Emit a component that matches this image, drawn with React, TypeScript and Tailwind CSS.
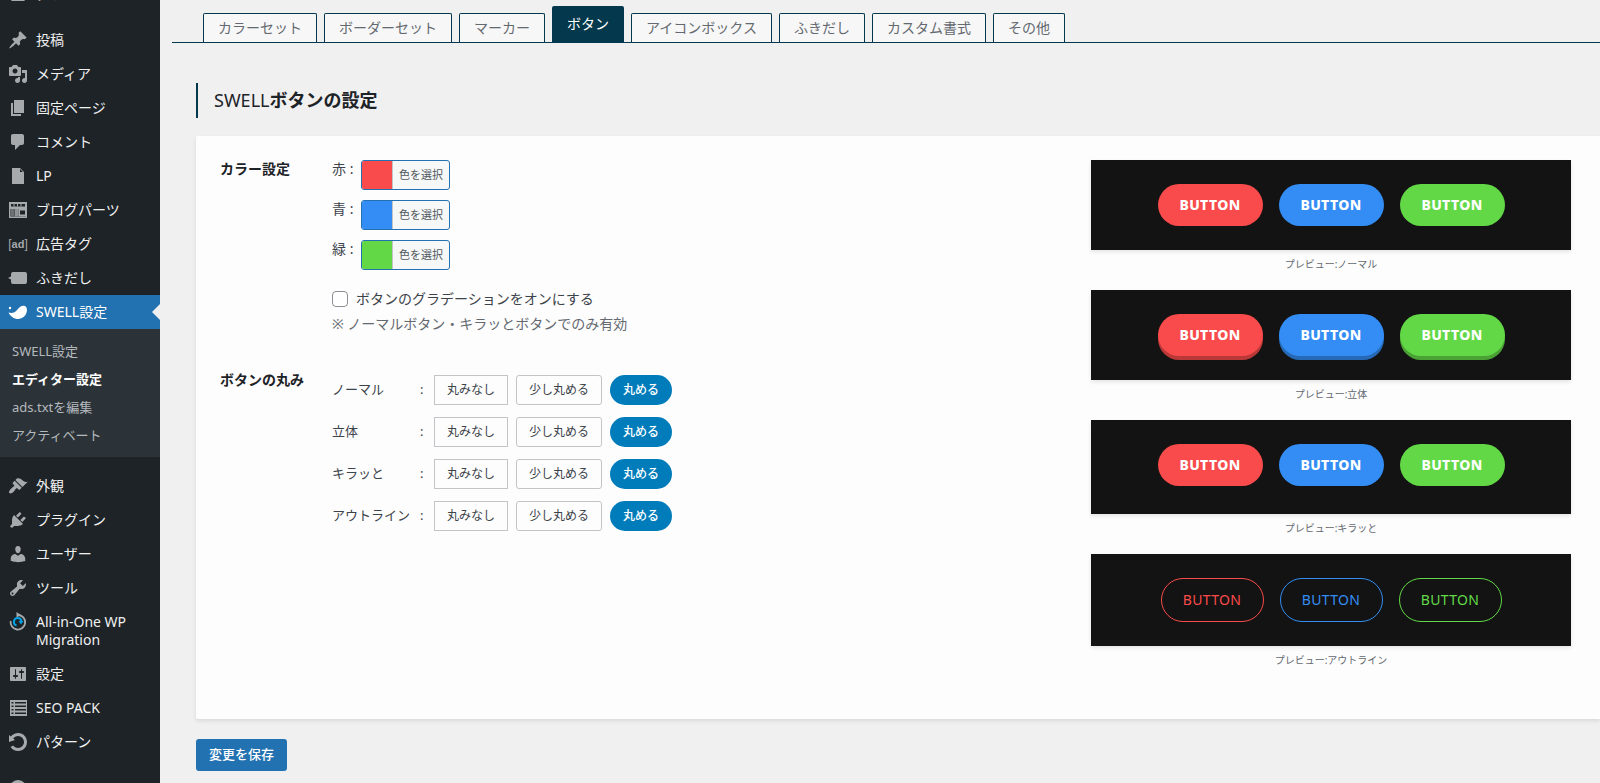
import { ReactNode } from 'react';

const ICONS = {
  dashboard: 'M3.760 17h12.480A8 8 0 0 0 18 12a8 8 0 1 0-16 0c0 1.890.66 3.630 1.760 5zM10 5l1 1-1 1-1-1zm-3.500 2l1 1-1 1-1-1zm9 1l-4 5.500a1.700 1.700 0 1 1-2-1.500z',
  page: 'M6 15V2h10v13H6zm-1 1h8v2H3V5h2v11z',
  post: 'M10.44 3.02l1.82-1.82 6.36 6.35-1.83 1.82c-1.05-.68-2.48-.57-3.41.36l-.75.75c-.92.93-1.04 2.35-.35 3.41l-1.83 1.82-2.41-2.41-2.8 2.79c-.42.42-3.38 2.71-3.8 2.29s1.86-3.39 2.28-3.81l2.79-2.79L4.1 9.36l1.83-1.82c1.05.69 2.48.57 3.4-.36l.75-.75c.93-.92 1.05-2.35.36-3.41z',
  media: 'M13 11V4c0-.55-.45-1-1-1h-1.67L9 1H5L3.67 3H2c-.55 0-1 .45-1 1v7c0 .55.45 1 1 1h10c.55 0 1-.45 1-1zM7 4.5c1.38 0 2.5 1.12 2.5 2.5S8.38 9.5 7 9.5 4.5 8.38 4.5 7 5.62 4.5 7 4.5zM14 6h5v10.5c0 1.38-1.12 2.5-2.5 2.5S14 17.88 14 16.5s1.12-2.5 2.5-2.5c.17 0 .34.02.5.05V9h-3V6zm-4 8.05V13h2v3.5c0 1.38-1.12 2.5-2.5 2.5S7 17.88 7 16.5 8.12 14 9.5 14c.17 0 .34.02.5.05z',
  comment: 'M5 2h9c1.1 0 2 .9 2 2v7c0 1.1-.9 2-2 2h-2l-5 5v-5H5c-1.1 0-2-.9-2-2V4c0-1.1.9-2 2-2z',
  file: 'M12 2l4 4v12H4V2h8zm0 4h3l-3-3v3z',
  brush: 'M14.48 11.06L7.41 3.99l1.5-1.5c.5-.56 2.3-.47 3.51.32 1.21.8 1.43 1.28 2.91 2.1 1.18.64 2.45 1.26 4.45.85zm-.71.71L6.7 4.7 4.93 6.47c-.39.39-.39 1.02 0 1.41l1.06 1.06c.39.39.39 1.03 0 1.42-.6.6-1.43 1.11-2.21 1.69-.35.26-.7.53-1.01.84C1.43 14.23.4 16.08 1.4 17.07c.99 1 2.84-.03 4.18-1.36.31-.31.58-.66.85-1.02.57-.78 1.08-1.61 1.69-2.21.39-.39 1.02-.39 1.41 0l1.06 1.06c.39.39 1.02.39 1.41 0z',
  plugin: 'M13.11 4.36L9.87 7.6 8 5.73l3.24-3.24c.35-.34 1.05-.2 1.56.32.52.51.66 1.21.31 1.55zm-8 1.77l.91-1.12 9.01 9.01-1.19.84c-.71.71-2.63 1.16-3.82 1.16H6.14L4.9 17.26c-.59.59-1.54.59-2.12 0-.59-.58-.59-1.53 0-2.12l1.24-1.24v-3.88c0-1.13.4-3.19 1.09-3.89zm7.26 3.97l3.24-3.24c.34-.35 1.04-.21 1.55.31.52.51.66 1.21.31 1.55l-3.24 3.25z',
  user: 'M10 9.25c-2.27 0-2.73-3.44-2.73-3.44C7 4.02 7.82 2 9.97 2c2.16 0 2.98 2.02 2.71 3.81 0 0-.41 3.44-2.68 3.44zm0 2.57L12.72 10c2.39 0 4.52 2.33 4.52 4.53v2.49s-3.65 1.13-7.24 1.13c-3.65 0-7.24-1.13-7.24-1.13v-2.49c0-2.25 1.94-4.48 4.47-4.48z',
  tool: 'M16.68 9.77c-1.34 1.34-3.3 1.67-4.95.99l-5.41 6.52c-.99.99-2.59.99-3.58 0s-.99-2.59 0-3.57l6.52-5.42c-.68-1.65-.35-3.61.99-4.95 1.28-1.28 3.12-1.62 4.72-1.06l-2.89 2.89 2.82 2.82 2.86-2.87c.53 1.58.18 3.39-1.08 4.65zM3.81 16.21c.4.39 1.04.39 1.43 0 .4-.4.4-1.04 0-1.43-.39-.4-1.03-.4-1.43 0-.39.39-.39 1.03 0 1.43z',
  settings: 'M18 16V4c0-.55-.45-1-1-1H3c-.55 0-1 .45-1 1v12c0 .55.45 1 1 1h14c.55 0 1-.45 1-1zM8 11h1c.55 0 1 .45 1 1s-.45 1-1 1H8v1.5c0 .28-.22.5-.5.5s-.5-.22-.5-.5V13H6c-.55 0-1-.45-1-1s.45-1 1-1h1V5.5c0-.28.22-.5.5-.5s.5.22.5.5V11zm5-2h-1c-.55 0-1-.45-1-1s.45-1 1-1h1V5.5c0-.28.22-.5.5-.5s.5.22.5.5V7h1c.55 0 1 .45 1 1s-.45 1-1 1h-1v5.5c0 .28-.22.5-.5.5s-.5-.22-.5-.5V9z',
  rotate: 'M10.25 1.02c5.1 0 8.75 4.04 8.75 9s-3.65 9-8.75 9c-3.2 0-6.02-1.59-7.68-3.99l2.59-1.52c1.1 1.5 2.86 2.51 4.84 2.51 3.3 0 6-2.79 6-6s-2.7-6-6-6c-1.97 0-3.72 1-4.82 2.49L7 8.02l-6 2v-7L2.89 4.6c1.69-2.17 4.36-3.58 7.36-3.58z',
  list: 'M2 2h17v16H2zM3.500 4v1.500h2V4zm3.500 0v1.500h11V4zM3.500 7.500V9h2V7.500zm3.500 0V9h11V7.500zM3.500 11v1.500h2V11zm3.500 0v1.500h11V11zm-3.500 3.500V16h2v-1.500zm3.500 0V16h11v-1.500z',
  balloon: 'M5 4h12a2 2 0 0 1 2 2v8a2 2 0 0 1-2 2H5a2 2 0 0 1-2-2v-2.500L0 10l3-1.500V6A2 2 0 0 1 5 4z',
  circle: 'M10 1a9 9 0 1 1 0 18 9 9 0 0 1 0-18zm0 3a6 6 0 1 0 0 12 6 6 0 0 0 0-12z',
};

function Icon({ name }: { name: keyof typeof ICONS }) {
  return (
    <svg viewBox="0 0 20 20" className="size-5" fill="currentColor" fillRule="evenodd">
      <path d={ICONS[name]} />
    </svg>
  );
}

function PartsIcon() {
  return (
    <svg viewBox="0 0 20 20" className="size-5">
      <path d="M1 2h18v16H1z" fill="currentColor" />
      <path d="M3 4h14v2.500H3zM2.500 9H18v7.500H2.500z" fill="#1d2327" />
      <path d="M5.500 4h1v2.500h-1zm3.500 0h1v2.500H9zm3.500 0h1v2.500h-1z" fill="currentColor" />
      <path d="M3 9h3v7.500H3z" fill="#6c7074" />
      <path d="M6.500 9h4v7.500h-4z" fill="#8f9396" />
      <path d="M11 9h7v1.500h-7zm0 5.500h7v2h-7zM10.500 9H12v7h-1.500zm6.500 0h1v7h-1z" fill="currentColor" />
    </svg>
  );
}

function SwellIcon() {
  return (
    <svg viewBox="0 0 20 20" className="size-5" fill="currentColor">
      <circle cx="2" cy="6" r="1.200" />
      <path d="M.5 10.500C3.500 11.500 7 11 9.500 7.500c2-2.800 4.500-4.300 6.800-3.700 2.600.7 3.300 4 2.200 7-1.500 4-4.800 6.200-8.300 6.200-4.200 0-7.700-2.500-9.700-6.500z" />
    </svg>
  );
}

function MigrationIcon() {
  return (
    <svg viewBox="0 0 20 20" className="size-5" fill="none">
      <path d="M10.500 3A7.300 7.300 0 1 1 2.700 9" stroke="currentColor" strokeWidth="1.800" />
      <path d="M8.500 0l4.500 3-4.500 2.500z" fill="currentColor" />
      <path d="M8.500 13.500A3.800 3.800 0 1 1 13.500 9.500" stroke="#00a0e3" strokeWidth="2" />
      <path d="M10.500 9h5L13 12.500z" fill="#00a0e3" />
    </svg>
  );
}

interface MenuEntry {
  label: string;
  icon: ReactNode;
}

const menuTop: MenuEntry[] = [
  { label: '投稿', icon: <Icon name="post" /> },
  { label: 'メディア', icon: <Icon name="media" /> },
  { label: '固定ページ', icon: <Icon name="page" /> },
  { label: 'コメント', icon: <Icon name="comment" /> },
  { label: 'LP', icon: <Icon name="file" /> },
  { label: 'ブログパーツ', icon: <PartsIcon /> },
  { label: '広告タグ', icon: <span className="font-['Liberation_Sans'] text-xs leading-5">[<b className="text-[11px]">ad</b>]</span> },
  { label: 'ふきだし', icon: <Icon name="balloon" /> },
];

const menuBottom: MenuEntry[] = [
  { label: '外観', icon: <Icon name="brush" /> },
  { label: 'プラグイン', icon: <Icon name="plugin" /> },
  { label: 'ユーザー', icon: <Icon name="user" /> },
  { label: 'ツール', icon: <Icon name="tool" /> },
  { label: 'All-in-One WP Migration', icon: <MigrationIcon /> },
  { label: '設定', icon: <Icon name="settings" /> },
  { label: 'SEO PACK', icon: <Icon name="list" /> },
  { label: 'パターン', icon: <Icon name="rotate" /> },
];

const tabs = ['カラーセット', 'ボーダーセット', 'マーカー', 'ボタン', 'アイコンボックス', 'ふきだし', 'カスタム書式', 'その他'];

const colors = [
  { label: '赤', swatch: 'bg-[#f94b4b]' },
  { label: '青', swatch: 'bg-[#338df4]' },
  { label: '緑', swatch: 'bg-[#62d847]' },
];

const roundness = ['ノーマル', '立体', 'キラッと', 'アウトライン'];

const fills = ['bg-[#f94b4b]', 'bg-[#338df4]', 'bg-[#62d847]'];
const edges = [
  'shadow-[0_4px_0_#ba3838]',
  'shadow-[0_4px_0_#266ab7]',
  'shadow-[0_4px_0_#4aa235]',
];
const outlines = [
  'border-[#f94b4b] text-[#f94b4b]',
  'border-[#338df4] text-[#338df4]',
  'border-[#62d847] text-[#62d847]',
];

function MenuLink({ label, icon }: MenuEntry) {
  return (
    <a href="#" className="flex text-sm leading-[18px] text-[#f0f0f1]">
      <span className="flex w-9 shrink-0 justify-center pt-[7px] text-[#a7aaad]">{icon}</span>
      <span className="py-2 pr-2">{label}</span>
    </a>
  );
}

function Sidebar() {
  return (
    <nav className="flex h-screen w-40 shrink-0 flex-col overflow-hidden bg-[#1d2327]">
      {/* scrolled: only the foot of the first entry is in view */}
      <div className="flex h-[23px] shrink-0 flex-col justify-end overflow-hidden pb-3">
        <MenuLink label="ダッシュボード" icon={<Icon name="dashboard" />} />
      </div>
      {menuTop.map((m) => (
        <MenuLink key={m.label} {...m} />
      ))}
      <a href="#" className="relative flex bg-[#2271b1] text-sm leading-[18px] text-white">
        <span className="flex w-9 shrink-0 justify-center pt-[7px]"><SwellIcon /></span>
        <span className="py-2">SWELL設定</span>
        <span className="absolute top-1/2 right-0 -translate-y-1/2 border-8 border-transparent border-r-[#f0f0f1]" />
      </a>
      <div className="mb-3 flex flex-col bg-[#2c3338] py-2 text-[13px] leading-[18px] text-[#b4b9be]">
        <a href="#" className="px-3 py-[5px]">SWELL設定</a>
        <a href="#" className="px-3 py-[5px] font-bold text-white">エディター設定</a>
        <a href="#" className="px-3 py-[5px]">ads.txtを編集</a>
        <a href="#" className="px-3 py-[5px]">アクティベート</a>
      </div>
      {menuBottom.map((m) => (
        <MenuLink key={m.label} {...m} />
      ))}
      <div className="flex w-9 shrink-0 justify-center pt-5 text-[#a7aaad]"><Icon name="circle" /></div>
    </nav>
  );
}

function Tabs() {
  return (
    <div className="flex h-[43px] items-end gap-[7px] border-b border-[#04384c] pl-[31px] text-sm">
      {tabs.map((t) =>
        t === 'ボタン' ? (
          <button key={t} className="h-9 rounded-t-xs bg-[#04384c] px-[15px] text-white">{t}</button>
        ) : (
          <button key={t} className="h-[29px] rounded-t-xs border border-b-0 border-[#04384c] bg-[#f7f7f7] px-[14px] text-[#646970]">{t}</button>
        )
      )}
    </div>
  );
}

function Preview({ name, className, children }: { name: string; className: string; children: ReactNode }) {
  return (
    <figure>
      <div className={`flex items-start justify-center gap-4 bg-[#131313] pt-6 shadow-[0_2px_4px_rgba(0,0,0,0.1)] ${className}`}>
        {children}
      </div>
      <figcaption className="pt-1 text-center text-[10px] leading-5 text-[#646970]">プレビュー:{name}</figcaption>
    </figure>
  );
}

const pill = "h-[42px] w-[105px] rounded-full text-sm font-extrabold tracking-wide text-white";

export default function App() {
  return (
    <div className="flex h-screen overflow-hidden bg-[#f0f0f1] font-['Noto_Sans','Noto_Sans_CJK_JP',sans-serif] text-[#3c434a]">
      <Sidebar />
      <main className="min-w-0 flex-1 pl-3">
        <Tabs />
        <div className="pt-10 pl-6">
          <h2 className="border-l-2 border-[#04384c] pl-4 text-lg leading-[35px] font-semibold text-[#1d2327]">
            <span className="font-normal">SWELL</span>ボタンの設定
          </h2>

          <section className="mt-[18px] flex rounded-l-xs bg-[#fdfdfd] pt-6 pr-[29px] pb-[49px] pl-6 shadow-[0_2px_4px_rgba(0,0,0,0.1)]">
            <div className="flex-1">
              <div className="flex">
                <h3 className="w-28 text-sm leading-[18px] font-bold text-[#1d2327]">カラー設定</h3>
                <div className="text-sm">
                  {colors.map((c) => (
                    <div key={c.label} className="mb-[10px] flex h-[30px] gap-2">
                      <span className="w-[21px] leading-[18px] whitespace-nowrap">{c.label} :</span>
                      <button aria-label={`${c.label} 色を選択`} className="flex w-[89px] overflow-hidden rounded-[3px] border border-[#2271b1] bg-[#f6f7f7] text-[11px] leading-7">
                        <span className={`w-[30px] self-stretch ${c.swatch}`} />
                        <span className="flex-1 border-l border-[#c3c4c7] text-[#50575e]">色を選択</span>
                      </button>
                    </div>
                  ))}
                  <label className="mt-4 flex items-center gap-2 leading-[26px]">
                    <input type="checkbox" className="size-4 appearance-none rounded border border-[#8c8f94] bg-white" />
                    ボタンのグラデーションをオンにする
                  </label>
                  <p className="leading-6 text-[#646970]">※ ノーマルボタン・キラッとボタンでのみ有効</p>
                </div>
              </div>

              <div className="mt-[35px] flex">
                <h3 className="w-28 text-sm leading-[18px] font-bold text-[#1d2327]">ボタンの丸み</h3>
                <div className="flex flex-col gap-3 pt-1 text-[13px]">
                  {roundness.map((r) => (
                    <div key={r} className="flex h-[30px] items-center gap-2">
                      <span className="w-20 whitespace-nowrap">{r}</span>
                      <span className="w-[6px]">:</span>
                      <button className="h-[30px] border border-[#c3c4c7] px-3 text-xs">丸みなし</button>
                      <button className="h-[30px] rounded-[3px] border border-[#c3c4c7] px-3 text-xs">少し丸める</button>
                      <button className="h-[30px] rounded-full bg-[#007cba] px-[13px] text-xs font-medium text-white">丸める</button>
                    </div>
                  ))}
                </div>
              </div>
            </div>

            <div className="flex w-[480px] shrink-0 flex-col gap-4">
              <Preview name="ノーマル" className="h-[90px]">
                {fills.map((f) => <button key={f} className={`${pill} ${f}`}>BUTTON</button>)}
              </Preview>
              <Preview name="立体" className="h-[90px]">
                {fills.map((f, i) => <button key={f} className={`${pill} ${f} ${edges[i]}`}>BUTTON</button>)}
              </Preview>
              <Preview name="キラッと" className="h-[94px]">
                {fills.map((f) => <button key={f} className={`${pill} ${f}`}>BUTTON</button>)}
              </Preview>
              <Preview name="アウトライン" className="h-[92px]">
                {outlines.map((o) => <button key={o} className={`h-11 w-[103px] rounded-full border text-sm tracking-wide ${o}`}>BUTTON</button>)}
              </Preview>
            </div>
          </section>

          <button className="mt-5 h-8 rounded-[3px] bg-[#2271b1] px-[13px] text-[13px] font-medium text-white">変更を保存</button>
        </div>
      </main>
    </div>
  );
}
